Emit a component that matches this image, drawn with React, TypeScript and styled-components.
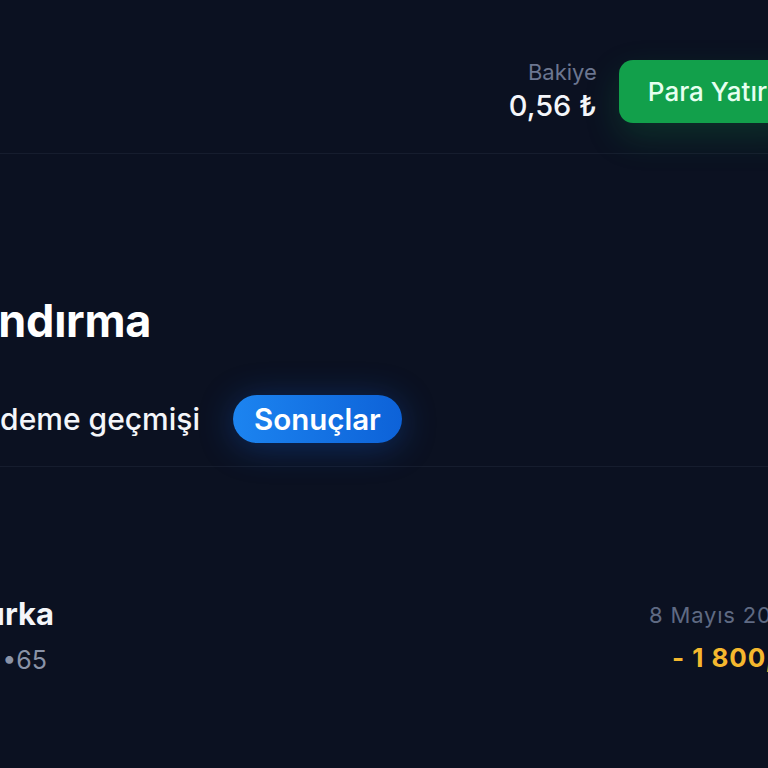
import styled, { createGlobalStyle } from 'styled-components';

const GlobalStyle = createGlobalStyle`
  html, body {
    margin: 0;
    padding: 0;
    background: #0b1121;
  }
  body {
    font-family: Inter, "Noto Sans", "Liberation Sans", sans-serif;
    color: #ffffff;
    -webkit-font-smoothing: antialiased;
  }
`;

const Page = styled.div`
  width: 768px;
  height: 768px;
  overflow: hidden;
  background: #0b1121;
`;

const Frame = styled.div`
  width: 900px;
`;

const Header = styled.header`
  height: 154px;
  box-sizing: border-box;
  padding: 30px 104px 0 0;
  display: flex;
  justify-content: flex-end;
  align-items: center;
  gap: 22px;
  border-bottom: 1px solid #161d2e;
`;

const Balance = styled.div`
  display: flex;
  flex-direction: column;
  align-items: flex-end;
`;

const BalanceLabel = styled.span`
  font-size: 22px;
  line-height: 26px;
  color: #6c7690;
`;

const BalanceValue = styled.span`
  margin-top: 3px;
  font-size: 29px;
  line-height: 36px;
  font-weight: 500;
  color: #f4f6fa;
`;

const DepositButton = styled.button`
  height: 63px;
  padding: 0 29px;
  border: none;
  border-radius: 14px;
  background: #12a04b;
  color: #e6fff0;
  font-family: inherit;
  font-size: 26px;
  font-weight: 500;
  white-space: nowrap;
  box-shadow: 0 14px 34px rgba(18, 160, 75, 0.22);
`;

/* left part of the page runs off the screen, so texts are anchored by their end */
const Lead = styled.div<{ $end: number }>`
  width: ${(p) => p.$end}px;
  flex-shrink: 0;
  display: flex;
  justify-content: flex-end;
  white-space: nowrap;
`;

const TitleBlock = styled.section`
  padding-top: 141px;
`;

const Title = styled.h1`
  margin: 0;
  font-size: 45px;
  line-height: 52px;
  font-weight: 700;
  letter-spacing: -0.3px;
`;

const Tabs = styled.nav`
  margin-top: 48px;
  padding-bottom: 23px;
  display: flex;
  align-items: center;
  gap: 33px;
  border-bottom: 1px solid #161d2e;
`;

const Tab = styled.span`
  font-size: 30px;
  line-height: 48px;
  font-weight: 500;
  color: #f4f6fa;
`;

const ActiveTab = styled.span`
  height: 48px;
  padding: 0 21px;
  border-radius: 24px;
  display: flex;
  align-items: center;
  background: linear-gradient(90deg, #1c84f0 0%, #0d62d8 100%);
  font-size: 29.5px;
  font-weight: 600;
  color: #ffffff;
  box-shadow: 0 4px 34px rgba(20, 96, 220, 0.35);
`;

const Transaction = styled.div`
  margin-top: 130px;
  display: flex;
  justify-content: space-between;
  align-items: flex-start;
  padding-right: 26px;
`;

const TxMain = styled.div`
  display: flex;
  flex-direction: column;
  gap: 14px;
`;

const TxName = styled.span`
  font-size: 31px;
  line-height: 34px;
  font-weight: 700;
  color: #f4f6fa;
`;

const TxCard = styled.span`
  font-size: 25px;
  line-height: 30px;
  color: #8a93a7;
`;

const TxSide = styled.div`
  padding-top: 4px;
  display: flex;
  flex-direction: column;
  align-items: flex-end;
  gap: 13px;
  white-space: nowrap;
`;

const TxDate = styled.span`
  font-size: 22px;
  line-height: 28px;
  letter-spacing: 0.8px;
  color: #5f6a83;
`;

const TxAmount = styled.span`
  font-size: 26px;
  line-height: 32px;
  font-weight: 700;
  letter-spacing: 0.95px;
  color: #f5b82e;
`;

export default function App() {
  return (
    <Page>
      <GlobalStyle />
      <Frame>
        <Header>
          <Balance>
            <BalanceLabel>Bakiye</BalanceLabel>
            <BalanceValue>0,56 ₺</BalanceValue>
          </Balance>
          <DepositButton>Para Yatır</DepositButton>
        </Header>

        <TitleBlock>
          <Lead $end={151}>
            <Title>Abonelik Sonlandırma</Title>
          </Lead>
        </TitleBlock>

        <Tabs>
          <Lead $end={200}>
            <Tab>Otomatik ödeme geçmişi</Tab>
          </Lead>
          <ActiveTab>Sonuçlar</ActiveTab>
        </Tabs>

        <Transaction>
          <TxMain>
            <Lead $end={54}>
              <TxName>Kart Turka</TxName>
            </Lead>
            <Lead $end={47}>
              <TxCard>4355 ••65</TxCard>
            </Lead>
          </TxMain>
          <TxSide>
            <TxDate>8 Mayıs 2025, 14:32</TxDate>
            <TxAmount>- 1 800,00 TRY</TxAmount>
          </TxSide>
        </Transaction>
      </Frame>
    </Page>
  );
}
